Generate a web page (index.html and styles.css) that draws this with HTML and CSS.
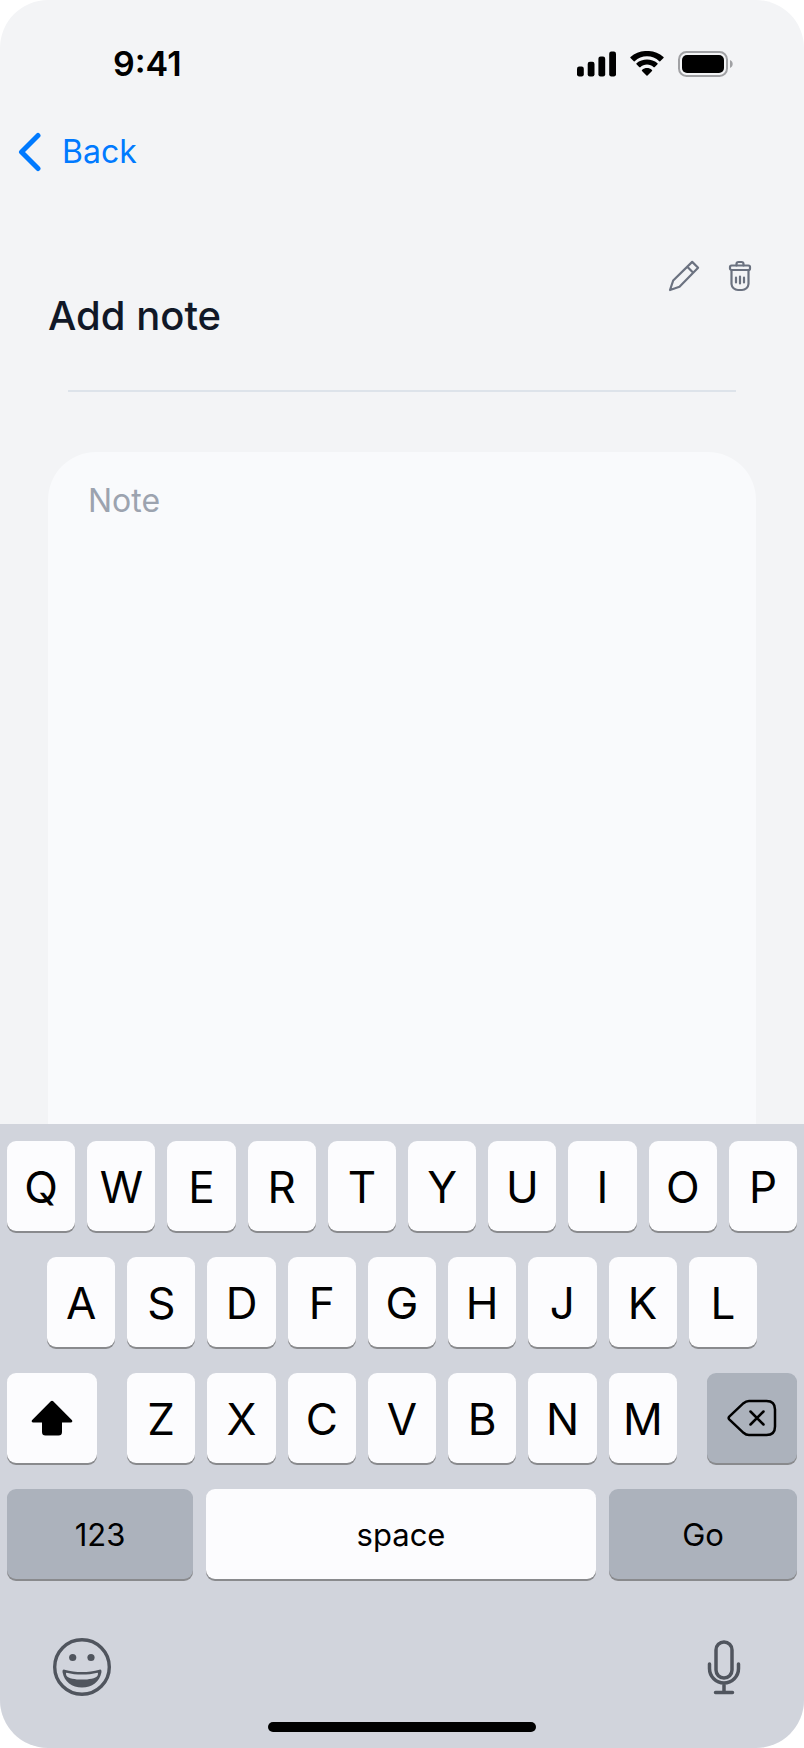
FILE: index.html
```html
<!DOCTYPE html>
<html lang="en">
<head>
    <meta charset="UTF-8">
    <meta name="viewport" content="width=device-width, initial-scale=1.0">
    <title>Add note</title>
    <link rel="stylesheet" href="styles.css">
</head>
<body>
    <div class="screen">
        <header class="status-bar">
            <span class="time">9:41</span>
            <div class="status-icons">
                <svg width="39" height="26" viewBox="0 0 39 26" aria-hidden="true">
                    <rect x="0" y="15.500" width="6.800" height="10" rx="2.200"/>
                    <rect x="10.700" y="10.800" width="6.800" height="14.700" rx="2.200"/>
                    <rect x="21.400" y="5.500" width="6.800" height="20" rx="2.200"/>
                    <rect x="32.200" y="0.500" width="6.800" height="25" rx="2.200"/>
                </svg>
                <svg width="34" height="26" viewBox="0 0 34 26" aria-hidden="true">
                    <path d="M17 5.200c4.600 0 9 1.800 12.300 5 .3.300.7.300.9 0l3.300-3.200c.3-.3.300-.7 0-1C24.200-2.100 9.800-2.100.5 6c-.3.300-.3.700 0 1l3.300 3.200c.2.300.6.300.9 0 3.300-3.200 7.700-5 12.300-5z"/>
                    <path d="M17 13.600c2.500 0 4.900.9 6.700 2.600.3.200.7.200.9 0l2.900-2.900c.3-.3.300-.7 0-1-6-5-15-5-21 0-.3.300-.3.700 0 1l2.900 2.900c.2.200.6.200.9 0 1.800-1.700 4.200-2.600 6.700-2.600z"/>
                    <path d="M22 18.900c.3.300.3.700 0 1l-4.500 4.700c-.3.300-.7.300-1 0L12 19.900c-.3-.3-.3-.7 0-1 2.900-2.400 7.100-2.400 10 0z"/>
                </svg>
                <svg width="56" height="26" viewBox="0 0 56 26" aria-hidden="true">
                    <rect x="1" y="1" width="48" height="24" rx="7.500" fill="none" stroke="#a0a1a4" stroke-width="2"/>
                    <rect x="4" y="4" width="42" height="18" rx="5"/>
                    <path d="M52 9v8c1.600-.7 2.700-2.200 2.700-4s-1.100-3.300-2.700-4z" fill="#a0a1a4"/>
                </svg>
            </div>
        </header>

        <nav class="nav-bar">
            <a href="#" class="back-link">
                <svg width="24" height="40" viewBox="0 0 24 40" aria-hidden="true">
                    <path d="M20 3.500 3.500 20 20 36.500"/>
                </svg>
                Back
            </a>
        </nav>

        <main class="content">
            <div class="note-header">
                <h1><label for="note">Add note</label></h1>
                <div class="note-actions">
                    <button type="button" aria-label="Edit note">
                        <svg width="32" height="32" viewBox="0 0 32 32" stroke-width="2.200" aria-hidden="true">
                            <path d="M2 30 5.200 20.500 24.200 1.900 30.100 7.800 11.500 26.800ZM19.300 6.800l5.900 5.900"/>
                        </svg>
                    </button>
                    <button type="button" aria-label="Delete note">
                        <svg width="24" height="32" viewBox="0 0 24 32" stroke-width="2.200" aria-hidden="true">
                            <rect x="2" y="5.500" width="20" height="4.500" rx="1.500"/>
                            <path d="M8.500 5.500V4a2 2 0 0 1 2-2h3a2 2 0 0 1 2 2v1.500M3.500 10v14a6.500 6.500 0 0 0 6.500 6h4a6.500 6.500 0 0 0 6.500-6V10M8 17.500v5M12 16.500v7M16 17.500v5"/>
                        </svg>
                    </button>
                </div>
            </div>
            <hr>
            <textarea id="note" placeholder="Note"></textarea>
        </main>

        <section class="keyboard">
            <div class="key-row">
                <button type="button" class="key">Q</button>
                <button type="button" class="key">W</button>
                <button type="button" class="key">E</button>
                <button type="button" class="key">R</button>
                <button type="button" class="key">T</button>
                <button type="button" class="key">Y</button>
                <button type="button" class="key">U</button>
                <button type="button" class="key">I</button>
                <button type="button" class="key">O</button>
                <button type="button" class="key">P</button>
            </div>
            <div class="key-row middle-row">
                <button type="button" class="key">A</button>
                <button type="button" class="key">S</button>
                <button type="button" class="key">D</button>
                <button type="button" class="key">F</button>
                <button type="button" class="key">G</button>
                <button type="button" class="key">H</button>
                <button type="button" class="key">J</button>
                <button type="button" class="key">K</button>
                <button type="button" class="key">L</button>
            </div>
            <div class="key-row shift-row">
                <button type="button" class="key side-key" aria-label="Shift">
                    <svg width="42" height="36" viewBox="0 0 42 36" aria-hidden="true">
                        <path d="M19.800 1.300a1.700 1.700 0 0 1 2.400 0L40.800 20c1 1.100.5 2.500-1 2.500H31V32q0 3.500-3.500 3.500h-13Q11 35.500 11 32v-9.500H2.200c-1.500 0-2-1.400-1-2.500z"/>
                    </svg>
                </button>
                <div class="key-row letters">
                    <button type="button" class="key">Z</button>
                    <button type="button" class="key">X</button>
                    <button type="button" class="key">C</button>
                    <button type="button" class="key">V</button>
                    <button type="button" class="key">B</button>
                    <button type="button" class="key">N</button>
                    <button type="button" class="key">M</button>
                </div>
                <button type="button" class="key side-key dark" aria-label="Delete">
                    <svg class="outline" width="50" height="38" viewBox="0 0 50 38" stroke="#000" stroke-width="2.500" aria-hidden="true">
                        <path d="M2.500 17.300 16.500 4.200Q19 2 22 2H39.500Q48 2 48 10.500V27.500Q48 36 39.500 36H22Q19 36 16.500 33.800L2.500 20.700Q.8 19 2.500 17.300ZM23.500 12.500 36.500 25.500M36.500 12.500 23.500 25.500"/>
                    </svg>
                </button>
            </div>
            <div class="bottom-row">
                <button type="button" class="key text-key dark">123</button>
                <button type="button" class="key text-key">space</button>
                <button type="button" class="key text-key dark">Go</button>
            </div>
            <div class="keyboard-tools">
                <button type="button" aria-label="Emoji">
                    <svg width="58" height="58" viewBox="1 1 58 58" fill="#50555e" aria-hidden="true">
                        <circle cx="30" cy="30" r="27.300" fill="none" stroke="#50555e" stroke-width="3.400"/>
                        <circle cx="20.700" cy="20.500" r="3.600"/>
                        <circle cx="39" cy="20.500" r="3.600"/>
                        <path d="M12.500 32.700C10.800 32.300 10.300 33.500 10.600 35.500 12.300 44.500 20 50.500 30 50.500S47.700 44.500 49.400 35.500C49.700 33.500 49.200 32.300 47.500 32.700 36 35.800 24 35.800 12.500 32.700ZM14.500 35.700C24.500 38.200 35.500 38.200 45.500 35.700 46.300 35.700 46 37.500 45.500 38.700 42 43.900 18 43.900 14.500 38.700 14 37.500 13.700 35.700 14.500 35.700Z" fill-rule="evenodd"/>
                    </svg>
                </button>
                <button type="button" aria-label="Dictate">
                    <svg class="outline" width="34" height="56" viewBox="0 0 34 56" stroke="#50555e" stroke-width="3.500" aria-hidden="true">
                        <rect x="9" y="3" width="16" height="36" rx="8"/>
                        <path d="M2.500 25v4.500a14.500 14.500 0 0 0 29 0V25M17 44v9.500M8.500 53.500h17"/>
                    </svg>
                </button>
            </div>
            <div class="home-indicator"></div>
        </section>
    </div>
</body>
</html>
```

FILE: styles.css
```css
* {
    box-sizing: border-box;
}
body {
    margin: 0;
    background-color: #fff;
    font-family: Inter, sans-serif;
}
button {
    padding: 0;
    border: none;
    background: none;
    font-family: inherit;
    cursor: pointer;
}
svg {
    display: block;
}
.screen {
    display: flex;
    flex-direction: column;
    min-height: 100vh;
    background-color: #f3f4f6;
    border-radius: 48px;
    overflow: hidden;
}

/* Status bar */
.status-bar {
    display: flex;
    justify-content: space-between;
    align-items: center;
    padding: 44px 70px 0 113px;
}
.time {
    font-size: 34px;
    font-weight: 600;
    line-height: 40px;
}
.status-icons {
    display: flex;
    gap: 14px;
}

/* Navigation */
.nav-bar {
    padding: 48px 18px 0;
}
.back-link {
    display: inline-flex;
    align-items: center;
    gap: 20px;
    color: #007aff;
    font-size: 32px;
    line-height: 40px;
    text-decoration: none;
}
.back-link path {
    fill: none;
    stroke: #007aff;
    stroke-width: 5;
    stroke-linecap: round;
    stroke-linejoin: round;
}

/* Note */
.content {
    flex: 1;
    display: flex;
    flex-direction: column;
    padding: 84px 48px 0;
}
.note-header {
    display: flex;
    justify-content: space-between;
    align-items: flex-start;
}
.note-header h1 {
    margin: 32px 0 0;
    color: #111827;
    font-size: 40px;
    font-weight: 500;
    line-height: 48px;
}
.note-actions {
    display: flex;
    gap: 28px;
    padding-right: 4px;
}
.note-actions svg {
    fill: none;
    stroke: #6b7280;
    stroke-linecap: round;
    stroke-linejoin: round;
}
hr {
    width: calc(100% - 40px);
    height: 2px;
    margin: 50px auto 60px;
    border: none;
    background-color: #dde3ea;
}
textarea {
    flex: 1;
    width: 100%;
    padding: 29px 40px;
    border: none;
    border-radius: 48px 48px 0 0;
    outline: none;
    background-color: #f9fafc;
    color: #111827;
    font-family: inherit;
    font-size: 32px;
    line-height: 40px;
    resize: none;
}
textarea::placeholder {
    color: #9ca3af;
}

/* Keyboard */
.keyboard {
    display: flex;
    flex-direction: column;
    gap: 26px;
    padding: 17px 7px 16px;
    background-color: #d1d4dc;
}
.key-row {
    display: flex;
    gap: 12px;
}
.middle-row {
    padding: 0 40px;
}
.shift-row {
    gap: 30px;
}
.letters {
    flex: 1;
}
.key {
    flex: 1;
    display: flex;
    justify-content: center;
    align-items: center;
    height: 90px;
    padding-top: 2px;
    border-radius: 9px;
    background-color: #fcfcfe;
    box-shadow: 0 2px 0 #898a8d;
    color: #000;
    font-size: 44px;
}
.side-key {
    flex: 0 0 90px;
    padding-top: 0;
}
.text-key {
    padding-top: 0;
    font-size: 31px;
}
.dark {
    background-color: #acb2bc;
}
.outline {
    fill: none;
    stroke-linecap: round;
    stroke-linejoin: round;
}
.bottom-row {
    display: grid;
    grid-template-columns: 186fr 390fr 188fr;
    gap: 13px;
}
.keyboard-tools {
    display: flex;
    justify-content: space-between;
    align-items: center;
    padding: 33px 56px 0 46px;
}
.home-indicator {
    width: 268px;
    height: 10px;
    margin: 0 auto;
    border-radius: 5px;
    background-color: #000;
}
```
